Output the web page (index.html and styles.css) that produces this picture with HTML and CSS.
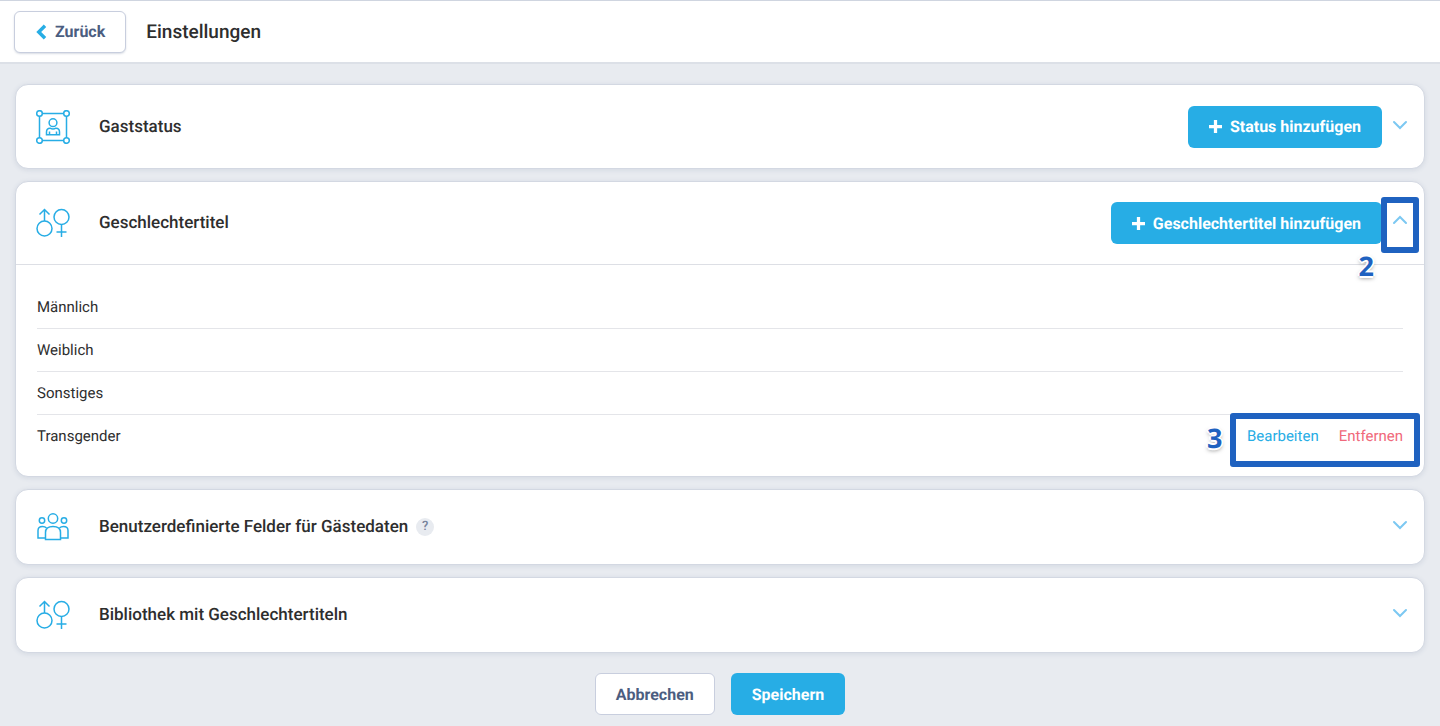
FILE: index.html
```
<!DOCTYPE html>
<html lang="de">
<head>
    <meta charset="utf-8">
    <title>Einstellungen</title>
    <meta name="viewport" content="width=device-width, initial-scale=1">
    <link rel="stylesheet" href="styles.css">
</head>
<body>
    <!-- shared icons -->
    <svg class="sprite" aria-hidden="true">
        <symbol id="icon-gender" viewBox="0 0 34 34">
            <circle cx="8.5" cy="22.5" r="7.5"/>
            <path d="M8.5 15V3.5M3.5 8.5L8.5 3.5L13.5 8.5"/>
            <circle cx="25.5" cy="11" r="7.5"/>
            <path d="M25.5 18.5V31M20.5 26H30.5"/>
        </symbol>
        <symbol id="icon-down" viewBox="0 0 16 16"><path d="M2 3L8 9L14 3"/></symbol>
        <symbol id="icon-up" viewBox="0 0 16 16"><path d="M2 8L8 2L14 8"/></symbol>
        <symbol id="icon-plus" viewBox="0 0 12 12"><path d="M6 0V12M0 6H12"/></symbol>
    </svg>

    <header class="topbar">
        <button type="button" class="btn btn-light btn-back">
            <svg class="back-icon" viewBox="0 0 10 14"><path d="M8.5 1.5L3 7L8.5 12.5"/></svg>
            Zurück
        </button>
        <h1>Einstellungen</h1>
    </header>

    <main class="container">
        <section class="card">
            <div class="card-header tall">
                <svg class="card-icon" viewBox="0 0 34 34">
                    <path d="M6 3.5H28M6 30.5H28M3.5 6V28M30.5 6V28"/>
                    <circle cx="3.5" cy="3.5" r="2.8"/>
                    <circle cx="30.5" cy="3.5" r="2.8"/>
                    <circle cx="3.5" cy="30.5" r="2.8"/>
                    <circle cx="30.5" cy="30.5" r="2.8"/>
                    <circle cx="17" cy="12.7" r="3.9"/>
                    <path d="M10.5 24.8V22Q10.5 18.2 14 18.2Q17 20 20 18.2Q23.5 18.2 23.5 22V24.8ZM13.5 24.8V21.5M20.5 24.8V21.5"/>
                </svg>
                <h2>Gaststatus</h2>
                <div class="actions">
                    <button type="button" class="btn btn-primary"><svg class="plus-icon"><use href="#icon-plus"/></svg>Status hinzufügen</button>
                    <button type="button" class="toggle" aria-label="Aufklappen"><svg><use href="#icon-down"/></svg></button>
                </div>
            </div>
        </section>

        <section class="card">
            <div class="card-header tall open">
                <svg class="card-icon"><use href="#icon-gender"/></svg>
                <h2>Geschlechtertitel</h2>
                <div class="actions">
                    <button type="button" class="btn btn-primary"><svg class="plus-icon"><use href="#icon-plus"/></svg>Geschlechtertitel hinzufügen</button>
                    <button type="button" class="toggle" aria-label="Zuklappen"><svg><use href="#icon-up"/></svg></button>
                    <span class="marker marker-toggle"></span>
                    <span class="step step-toggle">2</span>
                </div>
            </div>
            <ul class="titles">
                <li>Männlich</li>
                <li>Weiblich</li>
                <li>Sonstiges</li>
                <li>
                    Transgender
                    <div class="links">
                        <a href="#" class="edit">Bearbeiten</a>
                        <a href="#" class="remove">Entfernen</a>
                        <span class="marker marker-links"></span>
                        <span class="step step-links">3</span>
                    </div>
                </li>
            </ul>
        </section>

        <section class="card">
            <div class="card-header">
                <svg class="card-icon" viewBox="0 0 34 34">
                    <circle cx="17" cy="8.5" r="4.7"/>
                    <circle cx="6" cy="10.5" r="2.7"/>
                    <circle cx="28" cy="10.5" r="2.7"/>
                    <path d="M9.5 29.5V22.5Q9.5 16.5 17 16.5Q24.5 16.5 24.5 22.5V29.5Z"/>
                    <path d="M9.5 28H2V20.5Q2 16.5 6.5 16.5Q9 16.5 10.5 18M24.5 28H32V20.5Q32 16.5 27.5 16.5Q25 16.5 23.5 18"/>
                </svg>
                <h2>Benutzerdefinierte Felder für Gästedaten</h2>
                <button type="button" class="help">?</button>
                <div class="actions">
                    <button type="button" class="toggle" aria-label="Aufklappen"><svg><use href="#icon-down"/></svg></button>
                </div>
            </div>
        </section>

        <section class="card">
            <div class="card-header">
                <svg class="card-icon"><use href="#icon-gender"/></svg>
                <h2>Bibliothek mit Geschlechtertiteln</h2>
                <div class="actions">
                    <button type="button" class="toggle" aria-label="Aufklappen"><svg><use href="#icon-down"/></svg></button>
                </div>
            </div>
        </section>
    </main>

    <footer>
        <button type="button" class="btn btn-light">Abbrechen</button>
        <button type="submit" class="btn btn-primary">Speichern</button>
    </footer>
</body>
</html>
```
FILE: styles.css
```
* { box-sizing: border-box; }
body { margin: 0; background-color: #e8ebf0; color: #2e2e2e; font-family: Roboto, Arial, sans-serif; font-size: 15px; line-height: 20px; text-rendering: geometricPrecision; }
button { font-family: inherit; text-rendering: inherit; cursor: pointer; }
svg { fill: none; stroke: #27ade5; display: block; }
.sprite { position: absolute; width: 0; height: 0; }

.topbar { display: flex; align-items: center; gap: 20px; height: 64px; padding: 0 14px; background-color: white; border-top: 1px solid #cfd5e0; border-bottom: 2px solid #dce0e7; }
h1 { margin: 0; font-size: 19px; font-weight: 500; }
h2 { margin: 0; font-size: 17px; font-weight: 500; }

.btn { display: flex; align-items: center; height: 42px; padding: 0 20px; border: 1px solid transparent; border-radius: 6px; font-size: 16px; font-weight: 700; }
.btn-light { background-color: white; color: #4b5d80; border-color: #c8cede; }
.btn-primary { background-color: #27ade5; color: white; }
.btn-back { box-shadow: 0 1px 2px rgba(60,80,120,0.2); }
.back-icon { width: 12px; height: 16px; margin-right: 8px; stroke-width: 3; }
.plus-icon { width: 13px; height: 13px; margin-right: 8px; stroke: white; stroke-width: 3; }

.container { display: flex; flex-direction: column; gap: 12px; padding: 20px 15px; }
.card { background-color: white; border: 1px solid #d3d8e2; border-radius: 13px; box-shadow: 0 1px 5px rgba(60,80,120,0.12); }
.card-header { display: flex; align-items: center; min-height: 74px; padding: 0 16px 0 20px; }
.card-header.tall { min-height: 83px; }
.card-header.open { border-bottom: 1px solid #dddfe5; }
.card-icon { width: 34px; height: 34px; margin-right: 29px; stroke-width: 1.5; }
.actions { position: relative; display: flex; align-items: center; gap: 10px; margin-left: auto; }
.toggle { padding: 0; border: 0; background: none; }
.toggle svg { width: 16px; height: 16px; stroke: #7cc8f2; stroke-width: 2; stroke-linecap: round; }
.help { width: 18px; height: 18px; margin-left: 8px; padding: 0; border: 0; border-radius: 50%; background-color: #e8ebf0; color: #77839b; font-size: 13px; font-weight: 500; line-height: 18px; }

.titles { margin: 0; padding: 21px 21px 19px; list-style: none; }
.titles li { display: flex; align-items: center; justify-content: space-between; height: 43px; border-bottom: 1px solid #e4e5e9; }
.titles li:last-child { height: 42px; border-bottom: 0; }
.links { position: relative; display: flex; gap: 20px; }
.links a { text-decoration: none; }
.edit { color: #27ade5; }
.remove { color: #f0697b; }

/* highlighted steps */
.marker { position: absolute; border: 6px solid #1f62c0; border-radius: 3px; pointer-events: none; }
.marker-toggle { top: -5px; right: -11px; width: 38px; height: 56px; }
.marker-links { top: -13px; right: -17px; left: -17px; height: 54px; }
.step { position: absolute; color: #1f62c0; font-family: "Noto Sans", "Open Sans", sans-serif; font-size: 27px; font-weight: 700; line-height: 28px; text-shadow: -2px 0 white, 2px 0 white, 0 -2px white, 0 2px white, 0 2px 4px rgba(0,0,0,0.5); }
.step-toggle { top: 50px; right: 34px; }
.step-links { top: -2px; left: -40px; }

footer { display: flex; justify-content: center; gap: 16px; }
```
